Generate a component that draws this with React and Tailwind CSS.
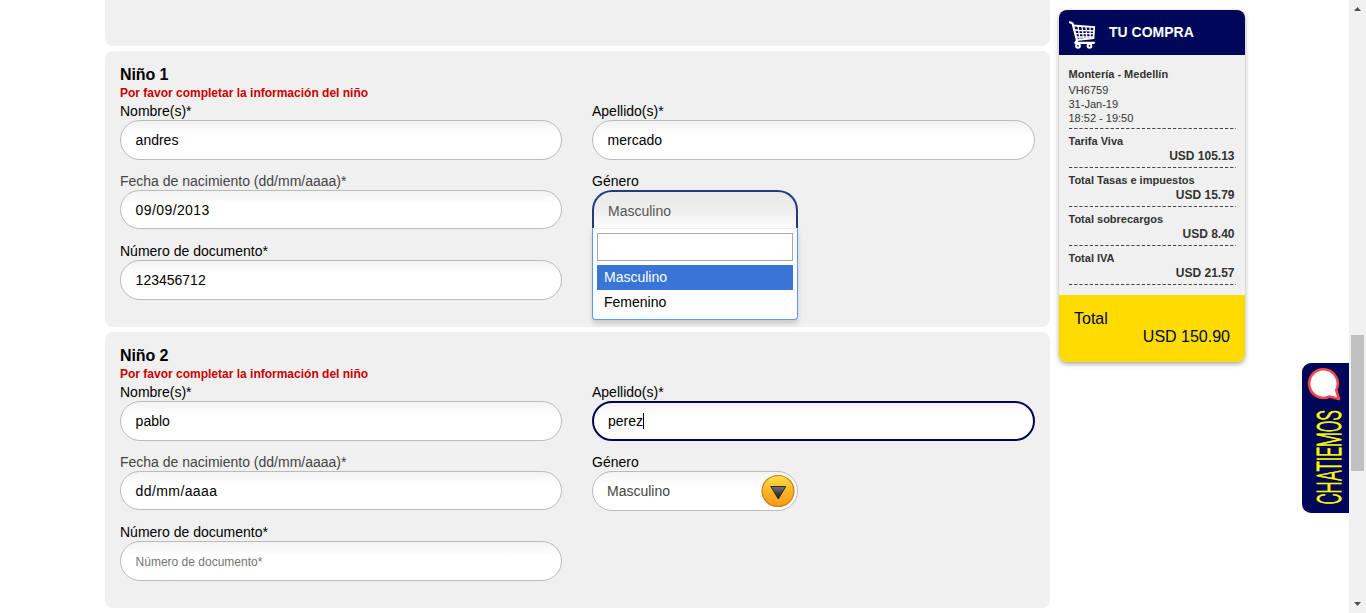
import React from "react";

const inputBase =
  "flex w-full items-center rounded-[20px] px-[15px] text-sm text-black bg-linear-to-b from-[#f3f3f3] from-0% via-white via-35% to-white";

function Field({ label, value, muted, short, focused, placeholder }) {
  return (
    <div className="h-[70px]">
      <div className={`h-[18px] text-sm leading-[18px] whitespace-nowrap ${muted ? "text-[#444]" : "text-black"}`}>
        {label}
      </div>
      <div
        className={`${inputBase} ${short ? "h-[39px]" : "h-[40px]"} ${
          focused ? "border-2 border-[#000759] pl-[14px]!" : "border border-[#bbb] pl-[14.6px]!"
        }`}
      >
        <span className={placeholder ? "text-xs text-[#757575] pt-[2px]" : short ? "tracking-[0.4px]" : ""}>{value}</span>
        {focused && <span className="h-4 w-px bg-black" />}
      </div>
    </div>
  );
}

function ClosedSelect() {
  return (
    <div className={`${inputBase} h-[40px] justify-between border border-[#bbb] pr-[2.5px]! pl-[14px]! text-[#444]!`}>
      <span>Masculino</span>
      <svg width="34" height="34" viewBox="0 0 34 34">
        <defs>
          <linearGradient id="disc" x1="0" y1="0" x2="0" y2="1">
            <stop offset="0" stopColor="#fde047" />
            <stop offset="0.55" stopColor="#fbb125" />
            <stop offset="1" stopColor="#f79a14" />
          </linearGradient>
          <linearGradient id="arrow" x1="0" y1="0" x2="0" y2="1">
            <stop offset="0" stopColor="#777" />
            <stop offset="1" stopColor="#111" />
          </linearGradient>
        </defs>
        <ellipse cx="17" cy="17" rx="16" ry="15.5" fill="url(#disc)" stroke="#d17b14" strokeWidth="1.2" />
        <path d="M9.8 12.5H24.8L17.3 25Z" fill="url(#arrow)" stroke="#252b33" strokeWidth="1" />
      </svg>
    </div>
  );
}

function OpenSelect() {
  return (
    <div className="relative">
      <div className="h-[39px] rounded-t-[20px] border-x-2 border-t-2 border-[#233a82] bg-linear-to-b from-[#ebebeb] from-20% via-[#eeeeee] via-50% to-white pl-[14px] text-sm leading-[38px] text-[#555]">
        Masculino
      </div>
      <div className="absolute top-[38px] left-0 h-[92px] w-full rounded-b-[4px] border border-t-[#eee] border-[#5897fb] bg-white px-1 pt-1 shadow-[0_4px_5px_rgba(0,0,0,0.15)]">
        <div className="h-[28px] border border-[#aaa] bg-white" />
        <div className="mt-1 h-[25px] bg-[#3875d7] pl-[7px] text-sm leading-[25px] text-white">Masculino</div>
        <div className="h-[25px] pl-[7px] text-sm leading-[25px] text-black">Femenino</div>
      </div>
    </div>
  );
}

function Passenger({ title, name, surname, birth, doc, emptyDoc, focused, children }) {
  return (
    <section className="h-[276px] rounded-[8px] bg-[#f0f0f0] pt-[14px] pr-[15px] pl-[15px]">
      <h2 className="h-[20px] text-base leading-[20px] font-bold text-black -tracking-[0.1px]">{title}</h2>
      <p className="h-[17px] text-xs leading-[17px] font-bold text-[#c70000]">
        Por favor completar la información del niño
      </p>
      <div className="grid grid-cols-[442px_443px] gap-x-[30px]">
        <Field label="Nombre(s)*" value={name} />
        <Field label="Apellido(s)*" value={surname} focused={focused} />
        <Field label="Fecha de nacimiento (dd/mm/aaaa)*" value={birth} muted short />
        <div className="h-[70px] w-[206px]">
          <div className="h-[18px] text-sm leading-[18px] text-black">Género</div>
          {children}
        </div>
        <Field label="Número de documento*" value={doc} placeholder={emptyDoc} />
      </div>
    </section>
  );
}

const charges = [
  ["Tarifa Viva", "USD 105.13"],
  ["Total Tasas e impuestos", "USD 15.79"],
  ["Total sobrecargos", "USD 8.40"],
  ["Total IVA", "USD 21.57"],
];

function DashedLine() {
  return (
    <svg className="block" width="167" height="1">
      <path d="M0 .5H167" stroke="#444" strokeDasharray="3.2 2" />
    </svg>
  );
}

function Cart() {
  return (
    <svg width="28" height="28" viewBox="0 0 28 28" fill="none" stroke="#fff">
      <path d="M1 1.2L3.6 2.4 8 19.5 6.3 21.8H25" strokeWidth="2.2" strokeLinecap="round" strokeLinejoin="round" />
      <path d="M4 4.5L25.2 6.2 24.5 17.2 7.5 19" strokeWidth="1.8" />
      <path d="M9 5L11 18M13 5.5L14.5 18M17 6L17.7 18M21 6.5L21.2 17.5M5 9L25 10M6 12.7H24.7M7 16H24.5" strokeWidth="1.3" />
      <circle cx="9" cy="24.8" r="1.9" strokeWidth="2" />
      <circle cx="20.5" cy="24.8" r="1.9" strokeWidth="2" />
    </svg>
  );
}

function Summary() {
  return (
    <aside className="mt-[10px] ml-[9px] h-[351.5px] w-[186px] shrink-0 overflow-hidden rounded-[8px] bg-[#f0f0f0] shadow-[0_2px_5px_rgba(0,0,0,0.35)]">
      <header className="flex h-[45px] bg-[#000759] pt-[11px] pl-[10px]">
        <Cart />
        <span className="ml-[12px] text-sm leading-[22px] font-bold text-white">TU COMPRA</span>
      </header>
      <div className="h-[240px] pt-[11px] pl-[9.5px] text-[11px] leading-[14px] text-[#333]">
        <div className="h-[17px] leading-[16px] font-bold">Montería - Medellín</div>
        <div>VH6759</div>
        <div>31-Jan-19</div>
        <div>18:52 - 19:50</div>
        <div className="pt-[3px]">
          <DashedLine />
        </div>
        {charges.map(([label, price]) => (
          <div key={label} className="h-[39px] w-[167px] pt-[5px]">
            <div className="h-[15px] leading-[15px] font-bold">{label}</div>
            <div className="h-[18px] pr-[1px] text-right text-xs leading-[14px] font-bold">{price}</div>
            <DashedLine />
          </div>
        ))}
      </div>
      <div className="h-[67px] bg-[#ffdb00] px-[15px] pt-[15px] text-base leading-[18px] text-[#000740]">
        <div>Total</div>
        <div className="text-right">USD 150.90</div>
      </div>
    </aside>
  );
}

function ChatTab() {
  return (
    <div className="absolute top-[363px] right-[17px] h-[150px] w-[47px] rounded-l-[9px] bg-[#000759]">
      <svg width="47" height="150" viewBox="0 0 47 150">
        <path
          d="M27.5 33.5A14.3 14.3 0 1 1 34.2 27L37 36Z"
          fill="#fff"
          stroke="#f4484a"
          strokeWidth="2.6"
          strokeLinejoin="round"
        />
        <text
          transform="translate(38.9 141.5) rotate(-90) scale(0.48 1)"
          fontFamily="Roboto, sans-serif"
          fontWeight="300"
          fontSize="34"
          fill="#ffff00"
          stroke="#ffff00"
          strokeWidth="1"
          textLength="196"
          lengthAdjust="spacingAndGlyphs"
        >
          CHATIEMOS
        </text>
      </svg>
    </div>
  );
}

function Scrollbar() {
  return (
    <div className="flex h-full w-[17px] shrink-0 flex-col items-center bg-[#f1f1f1]">
      <svg className="block shrink-0" width="17" height="335">
        <path d="M5 11H12L8.5 7Z" fill="#505050" />
      </svg>
      <div className="h-[136px] w-[13px] shrink-0 bg-[#c1c1c1]" />
      <svg className="block shrink-0" width="17" height="142">
        <path d="M5 131H12L8.5 135Z" fill="#505050" />
      </svg>
    </div>
  );
}

export default function App() {
  return (
    <div className="relative flex h-[613px] w-[1366px] overflow-hidden bg-white font-['Liberation_Sans',Arial,sans-serif]">
      <main className="ml-[105px] flex w-[945px] shrink-0 flex-col gap-[5px]">
        <div className="h-[46px] shrink-0 rounded-b-[8px] bg-[#f0f0f0]" />
        <Passenger title="Niño 1" name="andres" surname="mercado" birth="09/09/2013" doc="123456712">
          <OpenSelect />
        </Passenger>
        <Passenger
          title="Niño 2"
          name="pablo"
          surname="perez"
          birth="dd/mm/aaaa"
          doc="Número de documento*"
          emptyDoc
          focused
        >
          <ClosedSelect />
        </Passenger>
      </main>
      <Summary />
      <div className="flex-1" />
      <Scrollbar />
      <ChatTab />
    </div>
  );
}
